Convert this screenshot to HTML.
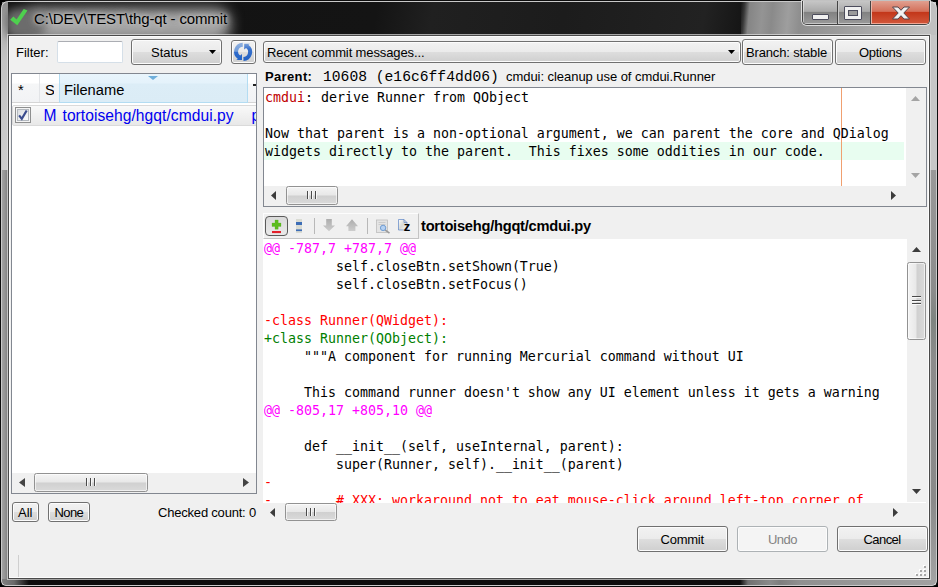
<!DOCTYPE html>
<html><head><meta charset="utf-8"><title>C:\DEV\TEST\thg-qt - commit</title>
<style>
*{box-sizing:border-box;margin:0;padding:0}
html,body{width:938px;height:587px;overflow:hidden;background:#000}
body{position:relative;font-family:"Liberation Sans",sans-serif;font-size:12px;color:#000}
.abs,.t,.btn,.box{position:absolute}
#frame{left:0;top:0;width:938px;height:587px;border-radius:8px 8px 6px 6px;background:#0d0d0d;overflow:hidden}
#frame .hl{left:1px;top:1px;right:1px;bottom:1px;border:1px solid rgba(235,235,235,.85);border-radius:7px 7px 5px 5px}
#client{left:9px;top:36px;width:920px;height:542px;background:#f0f0f0;box-shadow:0 0 0 1px #4a4a4a,0 0 0 2px rgba(225,225,225,.7),inset 0 0 0 1px #fcfcfc}
.t{white-space:pre;line-height:1}
.ui{font-family:"Liberation Sans",sans-serif;font-size:12px}
.mono{font-family:"DejaVu Sans Mono","Liberation Mono",monospace;font-size:13.29px}
.btn{border:1px solid #707070;border-radius:3px;background:linear-gradient(#f2f2f2 0%,#ebebeb 48%,#dddddd 52%,#cfcfcf 100%);box-shadow:inset 0 0 0 1px #fcfcfc}
.box{background:#fff;border:1px solid #828790}
.sb{background:#f0f0f0}
.gripv{width:10px;height:8px;background:repeating-linear-gradient(90deg,#4a4a4a 0,#4a4a4a 1px,#f8f8f8 1px,#f8f8f8 2px,transparent 2px,transparent 4px)}
.griph{width:9px;height:9px;background:repeating-linear-gradient(#4a4a4a 0,#4a4a4a 1px,#f8f8f8 1px,#f8f8f8 2px,transparent 2px,transparent 3.5px)}
.h{color:#ff00ff}.r{color:#ff0000}.g{color:#008000}
.thumb{position:absolute;border:1px solid #929292;border-radius:2.500px;background:linear-gradient(#f4f4f4,#e8e8e8 48%,#d0d0d0 52%,#dadada);box-shadow:inset 0 0 0 1px rgba(255,255,255,.6)}
.thumbv{position:absolute;border:1px solid #929292;border-radius:2.500px;background:linear-gradient(90deg,#f4f4f4,#e8e8e8 48%,#d0d0d0 52%,#dadada);box-shadow:inset 0 0 0 1px rgba(255,255,255,.6)}
</style></head><body>
<!-- window frame -->
<div id="frame" class="abs">
  <div class="abs" id="tbar" style="left:2px;top:2px;width:934px;height:33px;background:linear-gradient(100deg,#121212 0,#141414 40%,#202020 46%,#1c1c1c 60%,#222 75%,#161616 79%)"></div>
  <div class="abs" id="lglass1" style="left:2px;top:2px;width:6px;height:168px;background:linear-gradient(#8c8c8c 0,#b4b4b4 26px,#c4c4c4 60px,#cdcdcd 168px)"></div>
  <div class="abs" id="lglass2" style="left:2px;top:170px;width:6px;height:415px;background:linear-gradient(90deg,#a2a2a2,#949494 50%,#7c7c7c)"></div>
  <div class="abs" id="rglass1" style="left:930px;top:2px;width:6px;height:168px;background:#c6c6c6"></div>
  <div class="abs" id="rglass2" style="left:930px;top:170px;width:6px;height:415px;background:linear-gradient(#999 0,#8c8c8c 120px,#7e8480 150px,#8c8c8c 190px,#8a8a8a 330px,#a4a4a4 100%)"></div>
  <div class="abs" id="titlefog" style="left:26px;top:8px;width:204px;height:34px;border-radius:14px;background:#a4a4a4;filter:blur(7px)"></div><div class="abs" id="titlefog2" style="left:5px;top:8px;width:40px;height:32px;border-radius:12px;background:#6c6c6c;filter:blur(5px)"></div>
  <div class="abs" id="titlegray" style="left:741px;top:2px;width:195px;height:33px;background:linear-gradient(95deg,rgba(13,13,13,0) 0,#3a3a3a 4px,#858585 9px,#949494 22px,#8a8a8a 32px,#9e9e9e 48px,#8e8e8e 60px,#9c9c9c 100px,#c0c0c0 185px)"></div>
  <div class="abs" id="bglass" style="left:2px;top:579px;width:200px;height:6px;background:linear-gradient(90deg,#808080 0,#6a6a6a 12px,#0d0d0d 27px)"></div>
  <div class="abs" id="bglass2" style="left:740px;top:579px;width:196px;height:6px;background:linear-gradient(90deg,#0d0d0d 0,#707070 8px,#8a8a8a 30px,#7e7e7e 40px,#909090 60px,#a2a2a2 100%)"></div>
  <div class="abs hl"></div>
</div>
<svg class="abs" id="icoCheck" style="left:0;top:0" width="34" height="34" viewBox="0 0 34 34"><path d="M10.200 19.800L13.400 16.600L16.600 19.400L23.700 9L27.500 10.400L17.300 25.200Z" fill="#4ed04e"/></svg>
<div class="t" id="title" style="letter-spacing:-0.14px;left:34px;top:11px;font-size:15px;color:#000;text-shadow:0 0 3px #c4c4c4,0 0 6px #c0c0c0,0 0 9px #b8b8b8">C:\DEV\TEST\thg-qt - commit</div>
<!-- caption buttons -->
<div class="abs" id="capbtns" style="left:802px;top:1px;width:128px;height:24px;border:1px solid #454545;border-top:none;border-radius:0 0 5px 5px;box-shadow:0 0 0 1px rgba(240,240,240,.8);overflow:hidden">
  <div class="abs" style="left:0;top:0;width:35px;height:23px;background:linear-gradient(#c6c6c6,#a9a9a9 45%,#828282 50%,#9a9a9a);border-right:1px solid #444;box-shadow:inset 1px -1px 0 rgba(255,255,255,.45)"></div>
  <div class="abs" style="left:35px;top:0;width:33px;height:23px;background:linear-gradient(#c6c6c6,#a9a9a9 45%,#828282 50%,#9a9a9a);border-right:1px solid #444;border-left:1px solid #c8c8c8;box-shadow:inset 0 -1px 0 rgba(255,255,255,.45)"></div>
  <div class="abs" style="left:68px;top:0;width:59px;height:23px;background:linear-gradient(#e0a090,#d4705a 45%,#c3371a 50%,#d2583c);border-left:1px solid #e7b7aa;box-shadow:inset -1px -1px 0 rgba(255,200,185,.7)"></div>
  <div class="abs" style="left:9px;top:13px;width:17px;height:6px;background:#f0f0f0;border:1px solid #4c4c5c;border-radius:1px"></div>
  <div class="abs" style="left:41px;top:5px;width:18px;height:14px;border:1px solid #4c4c5c;background:#f0f0f0;border-radius:1px"><div class="abs" style="left:3px;top:3px;width:10px;height:6px;border:1px solid #4c4c5c;background:#9a9a9a"></div></div>
  <svg class="abs" style="left:88px;top:4px" width="20" height="16" viewBox="0 0 20 15"><path d="M1.500 1.500L7 1.500L10 4.800L13 1.500L18.500 1.500L12.800 7.500L18.500 13.500L13 13.500L10 10.200L7 13.500L1.500 13.500L7.200 7.500Z" fill="#f2f2f2" stroke="#54444a" stroke-width="1"/></svg>
</div>
<div id="client" class="abs"></div>
<!-- top row -->
<div class="t ui" id="lblFilter" style="left:16px;top:46px;font-size:13px">Filter:</div>
<div class="abs" id="filterInput" style="left:57px;top:41px;width:66px;height:22px;background:#fff;border:1px solid #d5dfe8;border-top-color:#abadb3;border-radius:2px"></div>
<div class="btn" id="btnStatus" style="left:131px;top:39px;width:91px;height:26px"></div>
<div class="t ui" id="txtStatus" style="left:151px;top:46px;font-size:13px">Status</div>
<svg class="abs" style="left:208.500px;top:49.500px" width="7" height="4"><path d="M0 0H7L3.500 4Z" fill="#000"/></svg>
<div class="btn" id="btnRefresh" style="left:231px;top:40px;width:25px;height:24px"></div>
<svg class="abs" id="icoRefresh" style="left:231px;top:40px" width="25" height="24" viewBox="0 0 25 24">
  <defs><linearGradient id="rg1" x1="0" y1="0" x2="0" y2="1"><stop offset="0" stop-color="#8fb0df"/><stop offset=".5" stop-color="#6f9ad8"/><stop offset=".56" stop-color="#2e6acb"/><stop offset="1" stop-color="#2465c7"/></linearGradient>
  <linearGradient id="rg2" x1="0" y1="0" x2="0" y2="1"><stop offset="0" stop-color="#7aa1da"/><stop offset=".3" stop-color="#3a72cc"/><stop offset="1" stop-color="#1f5fc2"/></linearGradient></defs>
  <path d="M11.700 2.700 A8.900 8.900 0 0 0 6.900 18.900 L5.100 19.900 L11 19.900 L11 14 L9.200 15.600 A4.900 4.900 0 0 1 11.800 6.700 Z" fill="url(#rg1)"/>
  <path d="M12.500 20.900 A8.900 8.900 0 0 0 17.300 4.700 L19.100 3.700 L13.200 3.700 L13.200 9.600 L15 8 A4.900 4.900 0 0 1 12.400 16.900 Z" fill="url(#rg2)"/>
</svg>
<div class="abs" id="combo" style="left:263px;top:41px;width:478px;height:22px;border:1px solid #707070;border-radius:3px;background:linear-gradient(#f2f2f2 0%,#ebebeb 48%,#dddddd 52%,#cfcfcf 100%);box-shadow:inset 0 0 0 1px #fcfcfc"></div>
<div class="t ui" id="txtCombo" style="letter-spacing:-0.12px;left:267px;top:46px;font-size:13px">Recent commit messages...</div>
<svg class="abs" style="left:728px;top:49.500px" width="7" height="4"><path d="M0 0H7L3.500 4Z" fill="#000"/></svg>
<div class="btn" id="btnBranch" style="left:742px;top:39px;width:91px;height:26px"></div>
<div class="t ui" id="txtBranch" style="letter-spacing:-0.15px;left:746px;top:46px;font-size:13px">Branch: stable</div>
<div class="btn" id="btnOptions" style="left:835px;top:39px;width:91px;height:26px"></div>
<div class="t ui" id="txtOptions" style="letter-spacing:-0.3px;left:859px;top:46px;font-size:13px">Options</div>

<!-- parent line -->
<div class="t ui" id="txtParent" style="letter-spacing:0.35px;left:265px;top:70px;font-size:13px;font-weight:bold">Parent:</div>
<div class="t" id="txtRev" style="left:323px;top:70px;font-family:'Liberation Mono',monospace;font-size:14.67px">10608 (e16c6ff4dd06)</div>
<div class="t ui" id="txtDesc" style="letter-spacing:-0.05px;left:506px;top:70px;font-size:13px">cmdui: cleanup use of cmdui.Runner</div>
<!-- file tree -->
<div class="box" id="tree" style="left:11px;top:73px;width:246px;height:421px;overflow:hidden">
  <div class="abs" id="hdr" style="left:0;top:0;width:244px;height:29px;background:linear-gradient(#fff 0,#fff 9px,#f5f6f7 10px,#f2f3f5 27px);border-bottom:1px solid #d5d5d5"></div>
  <div class="abs" style="left:27px;top:0;width:1px;height:28px;background:#e2e4e7"></div>
  <div class="abs" id="hdrsel" style="left:47px;top:0;width:189px;height:29px;background:linear-gradient(#e9f5fc 0,#e4f2fb 9px,#dcedf7 10px,#dbecf6 27px);border:1px solid #b3dcf2;border-top:none"></div>
  <div class="abs" style="left:241px;top:10px;width:4px;height:1.500px;background:#222"></div>
  <svg class="abs" style="left:136px;top:2px" width="10" height="4"><path d="M0 0H10L5 4Z" fill="#6fafdb"/></svg>
  <div class="t ui" id="h1" style="left:6px;top:9px;font-size:14.67px">*</div>
  <div class="abs" style="left:33px;top:0;width:9px;height:27px;overflow:hidden"><div class="t ui" id="h2" style="left:0px;top:9px;font-size:14.67px">St</div></div>
  <div class="t ui" id="h3" style="left:52px;top:9px;font-size:14.67px">Filename</div>
  <div class="abs" id="row" style="left:0;top:30.500px;width:250px;height:21.500px;border:1px solid #dadada;border-radius:2px;background:linear-gradient(#f9f9f9,#e8e8e8)"></div>
  <div class="abs" id="cb" style="left:3px;top:33px;width:16px;height:16px;border:1px solid #8e8f8f;background:linear-gradient(135deg,#d4d8dc,#f4f5f6 70%,#fff);box-shadow:inset 0 0 0 1px #f4f4f4,inset 0 0 0 2px #b3b8be"></div>
  <svg class="abs" id="icoTick" style="left:0;top:30px" width="22" height="20" viewBox="0 30 22 20"><path d="M7.100 41.300L9.800 44.800L14.700 36.500" fill="none" stroke="#3a4c8e" stroke-width="2.200"/></svg>
  <div class="t ui" id="r1" style="left:31.500px;top:34px;font-size:15.600px;color:#0000f0">M</div>
  <div class="t ui" id="r2" style="letter-spacing:0.05px;left:50.500px;top:34px;font-size:15.600px;color:#0000f0">tortoisehg/hgqt/cmdui.py</div>
  <div class="t ui" id="r3" style="left:239.500px;top:34px;font-size:15.600px;color:#0000f0">py</div>
  <!-- hscroll -->
  <div class="abs sb" style="left:0;top:399px;width:244px;height:20px"></div>
  <svg class="abs" style="left:7px;top:404px" width="6" height="9"><path d="M6 0V9L0 4.5Z" fill="#444"/></svg>
  <svg class="abs" style="left:231px;top:404px" width="6" height="9"><path d="M0 0V9L6 4.5Z" fill="#444"/></svg>
  <div class="thumb" id="th1" style="left:22px;top:399px;width:114px;height:19px"></div>
  <div class="abs gripv" style="left:74px;top:404px"></div>
</div>
<div class="btn" id="btnAll" style="left:12px;top:502px;width:27px;height:20px"></div>
<div class="t ui" id="txtAll" style="left:18px;top:506px;font-size:13px">All</div>
<div class="btn" id="btnNone" style="left:48px;top:502px;width:42px;height:20px"></div>
<div class="t ui" id="txtNone" style="letter-spacing:-0.6px;left:54.5px;top:506px;font-size:13px">None</div>
<div class="t ui" id="txtChecked" style="letter-spacing:-0.2px;left:158px;top:506px;font-size:13px">Checked count: 0</div>
<div class="abs" style="left:18px;top:555px;width:1px;height:22px;background:#cfcfcf"></div>

<!-- commit message box -->
<div class="box" id="msg" style="left:263px;top:87px;width:664px;height:120px;overflow:hidden">
  <div class="abs" style="left:0;top:54px;width:640px;height:18px;background:#e8fdf0"></div>
  <div class="abs" style="left:577px;top:0;width:1px;height:98px;background:#f0a070"></div>
  <div class="t mono" id="m1" style="left:1px;top:1px;line-height:18px"><span style="color:#c00000">cmdui</span>: derive Runner from QObject

Now that parent is a non-optional argument, we can parent the core and QDialog
widgets directly to the parent.  This fixes some oddities in our code.</div>
  <!-- vscroll -->
  <div class="abs sb" style="left:642px;top:0;width:20px;height:98px"></div>
  <svg class="abs" style="left:647px;top:8px" width="9" height="5"><path d="M0 5H9L4.500 0Z" fill="#a4a4a4"/></svg>
  <svg class="abs" style="left:647px;top:85px" width="9" height="5"><path d="M0 0H9L4.500 5Z" fill="#a4a4a4"/></svg>
  <!-- hscroll -->
  <div class="abs sb" style="left:0;top:98px;width:662px;height:20px"></div>
  <svg class="abs" style="left:7px;top:103px" width="5" height="9"><path d="M5 0V9L0 4.500Z" fill="#3c3c3c"/></svg>
  <svg class="abs" style="left:627px;top:103px" width="5" height="9"><path d="M0 0V9L5 4.500Z" fill="#3c3c3c"/></svg>
  <div class="thumb" id="th2" style="left:22px;top:98px;width:52px;height:19px"></div>
  <div class="abs gripv" style="left:43px;top:103px"></div>
</div>
<!-- diff toolbar -->
<div class="abs" id="tb" style="left:263px;top:213px;width:156px;height:26px;border:1px solid #c4c4c4;border-left-color:#fdfdfd;border-top-color:#fdfdfd"></div>
<div class="abs" id="tbtn1" style="left:265px;top:216px;width:23px;height:20px;border:1.300px solid #5a5a5a;border-radius:4px;background:linear-gradient(#dadada,#e9e9e9)"></div>
<svg class="abs" id="ico1" style="left:270px;top:218px" width="13" height="16" viewBox="270 218 13 16"><path d="M275 220H278.200V223H281V226.400H278.200V229.200H275V226.400H272V223H275Z" fill="#5cbc1e" stroke="#4aa814" stroke-width=".25"/><rect x="272" y="231" width="9" height="2.100" fill="#e3202a"/></svg>
<svg class="abs" id="ico2" style="left:295px;top:218px" width="8" height="16" viewBox="295 218 8 16"><rect x="296" y="219" width="6" height="14" fill="#d9dbd3"/><rect x="296" y="222" width="6" height="3" fill="#3d6db6"/><rect x="296" y="229.400" width="6" height="1.700" fill="#3d6db6"/></svg>
<div class="abs" style="left:314px;top:218px;width:1px;height:16px;background:#b8b8b8"></div>
<svg class="abs" id="ico3" style="left:321px;top:218px" width="16" height="16" viewBox="321 218 16 16"><defs><linearGradient id="ag" x1="0" y1="0" x2="0" y2="1"><stop offset="0" stop-color="#adadad"/><stop offset="1" stop-color="#cdcdcd"/></linearGradient></defs><path d="M326.200 219H331.800V225.500H335L329 231.200L323 225.500H326.200Z" fill="url(#ag)"/></svg>
<svg class="abs" id="ico4" style="left:344px;top:218px" width="16" height="16" viewBox="344 218 16 16"><path d="M348.400 231H355.400V226.200H358L352 219.300L346 226.200H348.400Z" fill="url(#ag)"/></svg>
<div class="abs" style="left:367px;top:218px;width:1px;height:16px;background:#b8b8b8"></div>
<svg class="abs" id="ico5" style="left:374px;top:218px" width="18" height="17" viewBox="374 218 18 17"><rect x="376.500" y="220" width="11" height="12.500" fill="#e4e4e4" stroke="#bdbdbd" stroke-width=".8"/><path d="M378.500 222.500H385.500M378.500 224.500H385.500" stroke="#c4c4c4" stroke-width=".8"/><path d="M385 229.800L389.500 233.200" stroke="#9a9a9a" stroke-width="1.600"/><circle cx="383.100" cy="227.900" r="2.700" fill="#b4d0f2" stroke="#6f9cd2" stroke-width="1"/></svg>
<svg class="abs" id="ico6" style="left:396px;top:217px" width="17" height="18" viewBox="396 217 17 18"><defs><linearGradient id="dg" x1="0" y1="0" x2="1" y2="1"><stop offset="0" stop-color="#fff"/><stop offset=".5" stop-color="#d8dad4"/><stop offset="1" stop-color="#fff"/></linearGradient></defs><path d="M398.500 219.500H404L407 222.500V230H398.500Z" fill="url(#dg)" stroke="#5b84c6" stroke-width=".7"/><path d="M404 219.500V222.500H407" fill="none" stroke="#5b84c6" stroke-width=".7"/><text x="403.800" y="231.400" font-family="Liberation Sans, sans-serif" font-weight="bold" font-size="13" fill="#000">z</text></svg>
<div class="t ui" id="txtFile" style="left:421px;top:218.500px;font-size:14.67px;letter-spacing:-0.25px;font-weight:bold">tortoisehg/hgqt/cmdui.py</div>
<!-- diff view -->
<div class="abs" id="diff" style="left:263px;top:239px;width:663px;height:283px;background:#fff;overflow:hidden">
<div class="t mono" id="d1" style="left:1px;top:1px;line-height:18px;color:#000"><span class="h">@@ -787,7 +787,7 @@</span>
         self.closeBtn.setShown(True)
         self.closeBtn.setFocus()

<span class="r">-class Runner(QWidget):</span>
<span class="g">+class Runner(QObject):</span>
     """A component for running Mercurial command without UI

     This command runner doesn't show any UI element unless it gets a warning
<span class="h">@@ -805,17 +805,10 @@</span>

     def __init__(self, useInternal, parent):
         super(Runner, self).__init__(parent)
<span class="r">-</span>
<span class="r">-        # XXX: workaround not to eat mouse-click around left-top corner of</span></div>
  <div class="abs sb" style="left:644px;top:0;width:19px;height:263px"></div>
  <svg class="abs" style="left:649px;top:8px" width="9" height="5"><path d="M0 5H9L4.500 0Z" fill="#3c3c3c"/></svg>
  <svg class="abs" style="left:649px;top:250px" width="9" height="5"><path d="M0 0H9L4.500 5Z" fill="#3c3c3c"/></svg>
  <div class="thumbv" id="th3" style="left:644px;top:22.500px;width:18.500px;height:78px"></div>
  <div class="abs griph" style="left:649px;top:57px"></div>
  <div class="abs sb" style="left:0;top:263.500px;width:663px;height:20px"></div>
  <svg class="abs" style="left:7px;top:269px" width="5" height="9"><path d="M5 0V9L0 4.500Z" fill="#3c3c3c"/></svg>
  <svg class="abs" style="left:630px;top:269px" width="5" height="9"><path d="M0 0V9L5 4.500Z" fill="#3c3c3c"/></svg>
  <div class="thumb" id="th4" style="left:22px;top:264px;width:52px;height:18px"></div>
  <div class="abs gripv" style="left:43px;top:269px"></div>
</div>
<!-- bottom buttons -->
<div class="btn" id="btnCommit" style="left:637px;top:526px;width:91px;height:26px"></div>
<div class="t ui" id="txtCommit" style="letter-spacing:-0.23px;left:660.500px;top:533px;font-size:13px">Commit</div>
<div class="btn" id="btnUndo" style="left:737px;top:526px;width:91px;height:26px;border-color:#adb2b5;background:#f4f4f4"></div>
<div class="t ui" id="txtUndo" style="letter-spacing:-0.55px;left:768px;top:533px;font-size:13px;color:#838383">Undo</div>
<div class="btn" id="btnCancel" style="left:837px;top:526px;width:91px;height:26px"></div>
<div class="t ui" id="txtCancel" style="letter-spacing:-0.57px;left:863.500px;top:533px;font-size:13px">Cancel</div>
<svg class="abs" id="sizegrip" style="left:914px;top:564px" width="13" height="13"><rect x="9" y="1" width="2" height="2" fill="#fff"/><rect x="10" y="2" width="2" height="2" fill="#a8a8a8"/><rect x="5" y="5" width="2" height="2" fill="#fff"/><rect x="6" y="6" width="2" height="2" fill="#a8a8a8"/><rect x="9" y="5" width="2" height="2" fill="#fff"/><rect x="10" y="6" width="2" height="2" fill="#a8a8a8"/><rect x="1" y="9" width="2" height="2" fill="#fff"/><rect x="2" y="10" width="2" height="2" fill="#a8a8a8"/><rect x="5" y="9" width="2" height="2" fill="#fff"/><rect x="6" y="10" width="2" height="2" fill="#a8a8a8"/><rect x="9" y="9" width="2" height="2" fill="#fff"/><rect x="10" y="10" width="2" height="2" fill="#a8a8a8"/></svg>
<!--NEXT-->
</body></html>
